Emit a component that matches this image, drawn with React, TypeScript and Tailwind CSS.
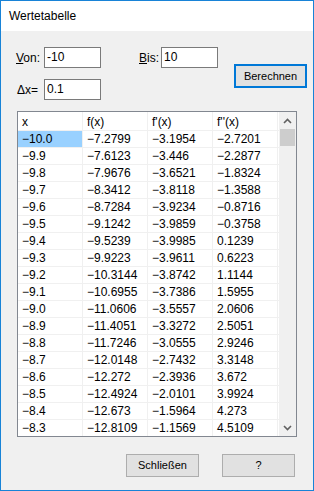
import React from "react";

const rows: string[][] = [
  ["−10.0", "−7.2799", "−3.1954", "−2.7201"],
  ["−9.9", "−7.6123", "−3.446", "−2.2877"],
  ["−9.8", "−7.9676", "−3.6521", "−1.8324"],
  ["−9.7", "−8.3412", "−3.8118", "−1.3588"],
  ["−9.6", "−8.7284", "−3.9234", "−0.8716"],
  ["−9.5", "−9.1242", "−3.9859", "−0.3758"],
  ["−9.4", "−9.5239", "−3.9985", "0.1239"],
  ["−9.3", "−9.9223", "−3.9611", "0.6223"],
  ["−9.2", "−10.3144", "−3.8742", "1.1144"],
  ["−9.1", "−10.6955", "−3.7386", "1.5955"],
  ["−9.0", "−11.0606", "−3.5557", "2.0606"],
  ["−8.9", "−11.4051", "−3.3272", "2.5051"],
  ["−8.8", "−11.7246", "−3.0555", "2.9246"],
  ["−8.7", "−12.0148", "−2.7432", "3.3148"],
  ["−8.6", "−12.272", "−2.3936", "3.672"],
  ["−8.5", "−12.4924", "−2.0101", "3.9924"],
  ["−8.4", "−12.673", "−1.5964", "4.273"],
  ["−8.3", "−12.8109", "−1.1569", "4.5109"],
];

const headers = ["x", "f(x)", "f'(x)", "f''(x)"];

function Chevron({ up }: { up?: boolean }) {
  return (
    <svg width="9" height="6" viewBox="0 0 9 6">
      <path
        d={up ? "M1 5 L4.5 1.5 L8 5" : "M1 1 L4.5 4.5 L8 1"}
        fill="none"
        stroke="#606060"
        strokeWidth="1.6"
      />
    </svg>
  );
}

export default function App() {
  return (
    <div
      className="w-[314px] h-[491px] border border-[#1883d7] bg-[#f0f0f0] flex flex-col text-[12px] text-black"
      style={{ fontFamily: '"Liberation Sans", Arial, sans-serif' }}
    >
      <div className="h-[30px] bg-white flex items-center pl-[8px] text-[12px]">Wertetabelle</div>

      <div className="flex pl-[15px] pt-[16px]">
        <div className="flex flex-col gap-[11px]">
          <div className="flex items-center h-[21px]">
            <span className="w-[28px]">
              <span className="underline">V</span>on:
            </span>
            <div className="w-[57px] h-[21px] bg-white border border-[#7a7a7a] pl-[2px] leading-[19px]">-10</div>
            <span className="w-[22px] ml-[38px]">
              <span className="underline">B</span>is:
            </span>
            <div className="w-[57px] h-[21px] bg-white border border-[#7a7a7a] pl-[2px] leading-[19px]">10</div>
          </div>
          <div className="flex items-center h-[21px]">
            <span className="w-[28px] pl-[1px]">Δx=</span>
            <div className="w-[57px] h-[21px] bg-white border border-[#7a7a7a] pl-[2px] leading-[19px]">0.1</div>
          </div>
        </div>
        <div className="ml-[16px] mt-[17px] w-[73px] h-[24px] border-2 border-[#0078d7] bg-[#e1e1e1] flex items-center justify-center text-[11px]">
          Berechnen
        </div>
      </div>

      <div className="ml-[16px] mt-[11px] w-[280px] h-[326px] border border-[#828790] bg-white flex">
        <div className="w-[261px] flex flex-col">
          <div className="flex h-[18px]">
            {headers.map((h, i) => (
              <div key={i} className="w-[65px] border-r border-[#f0f0f0] pl-[4px] leading-[20px]">
                {h}
              </div>
            ))}
          </div>
          {rows.map((r, ri) => (
            <div key={ri} className="flex h-[17px] border-t border-[#f0f0f0]">
              {r.map((c, ci) => (
                <div
                  key={ci}
                  className={
                    ri === 0 && ci === 0
                      ? "w-[65px] border-r border-[#f0f0f0] pl-[4px] leading-[16px] bg-[#99d1ff]"
                      : "w-[65px] border-r border-[#f0f0f0] pl-[4px] leading-[16px]"
                  }
                >
                  {c}
                </div>
              ))}
            </div>
          ))}
        </div>
        <div className="w-[17px] bg-[#f0f0f0] flex flex-col">
          <div className="h-[17px] flex items-center justify-center">
            <Chevron up />
          </div>
          <div className="flex-1 px-[1px]">
            <div className="h-[17px] bg-[#cdcdcd]" />
          </div>
          <div className="h-[17px] flex items-center justify-center">
            <Chevron />
          </div>
        </div>
      </div>

      <div className="flex pl-[125px] pt-[17px] gap-[23px]">
        <div className="w-[73px] h-[23px] border border-[#adadad] bg-[#e1e1e1] flex items-center justify-center text-[11px]">
          Schließen
        </div>
        <div className="w-[73px] h-[23px] border border-[#adadad] bg-[#e1e1e1] flex items-center justify-center text-[11px]">
          ?
        </div>
      </div>
    </div>
  );
}
